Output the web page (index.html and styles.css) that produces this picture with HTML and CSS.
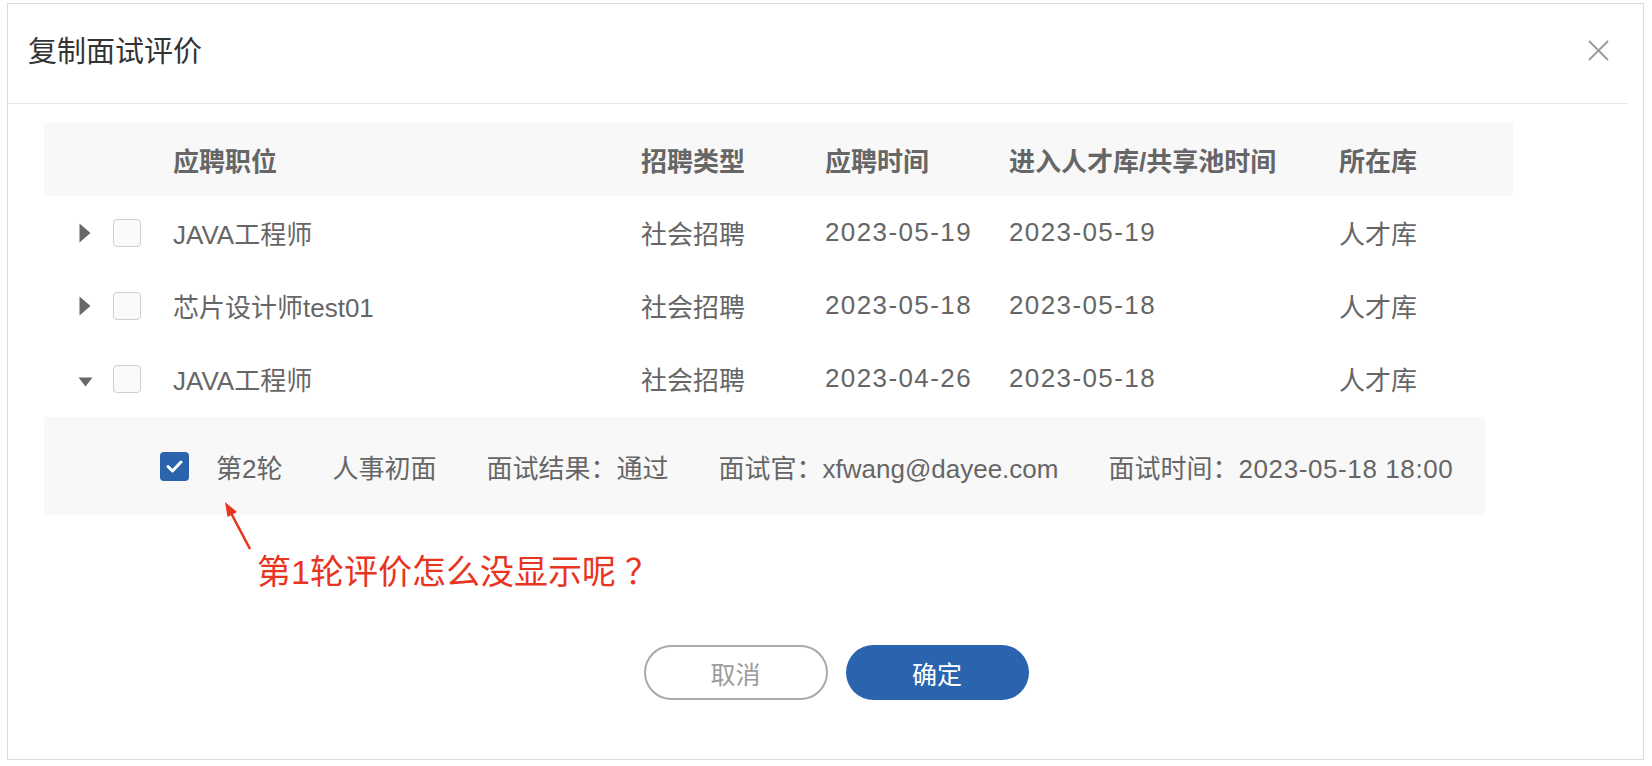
FILE: index.html
```html
<!DOCTYPE html>
<html lang="zh-CN">
<head>
<meta charset="utf-8">
<title>复制面试评价</title>
<link rel="stylesheet" href="styles.css">
</head>
<body>
<div class="dialog">
  <div class="dlg-header">
    <div class="dlg-title">复制面试评价</div>
    <svg class="close" width="21" height="21" viewBox="0 0 21 21"><path d="M1 1 L20 20 M20 1 L1 20" stroke="#9a9a9a" stroke-width="1.8" fill="none"/></svg>
  </div>
  <div class="dlg-body">
    <div class="table">
      <div class="row head">
        <div class="cell first"></div>
        <div class="cell">应聘职位</div>
        <div class="cell">招聘类型</div>
        <div class="cell">应聘时间</div>
        <div class="cell">进入人才库/共享池时间</div>
        <div class="cell">所在库</div>
      </div>
      <div class="row">
        <div class="cell first">
          <span class="arrow"><svg width="12" height="20" viewBox="0 0 12 20"><path d="M0.5 0.5 L11.5 10 L0.5 19.5 Z" fill="#676767"/></svg></span>
          <span class="cb"></span>
        </div>
        <div class="cell">JAVA工程师</div>
        <div class="cell">社会招聘</div>
        <div class="cell date">2023-05-19</div>
        <div class="cell date">2023-05-19</div>
        <div class="cell">人才库</div>
      </div>
      <div class="row">
        <div class="cell first">
          <span class="arrow"><svg width="12" height="20" viewBox="0 0 12 20"><path d="M0.5 0.5 L11.5 10 L0.5 19.5 Z" fill="#676767"/></svg></span>
          <span class="cb"></span>
        </div>
        <div class="cell">芯片设计师test01</div>
        <div class="cell">社会招聘</div>
        <div class="cell date">2023-05-18</div>
        <div class="cell date">2023-05-18</div>
        <div class="cell">人才库</div>
      </div>
      <div class="row">
        <div class="cell first">
          <span class="arrow down"><svg width="15" height="10" viewBox="0 0 15 10"><path d="M0.5 0.5 L14.5 0.5 L7.5 9.5 Z" fill="#676767"/></svg></span>
          <span class="cb"></span>
        </div>
        <div class="cell">JAVA工程师</div>
        <div class="cell">社会招聘</div>
        <div class="cell date">2023-04-26</div>
        <div class="cell date">2023-05-18</div>
        <div class="cell">人才库</div>
      </div>
    </div>
    <div class="subrow">
      <span class="cb checked"><svg width="17" height="13" viewBox="0 0 17 13"><path d="M2 6.5 L6.5 11 L15 2" stroke="#fff" stroke-width="3" fill="none" stroke-linecap="round" stroke-linejoin="round"/></svg></span>
      <span class="item">第2轮</span>
      <span class="item">人事初面</span>
      <span class="item">面试结果：通过</span>
      <span class="item">面试官：xfwang@dayee.com</span>
      <span class="item">面试时间：<span class="sdate">2023-05-18 18:00</span></span>
    </div>
    <div class="note">
      <svg class="note-arrow" width="32" height="52" viewBox="0 0 32 52"><line x1="9" y1="13" x2="28" y2="49" stroke="#e8351f" stroke-width="2.6"/><path d="M3 2 L15 12 L5.5 17 Z" fill="#e8351f"/></svg>
      第1轮评价怎么没显示呢<span class="q">？</span>
    </div>
  </div>
  <div class="dlg-footer">
    <button class="btn cancel">取消</button>
    <button class="btn ok">确定</button>
  </div>
</div>
</body>
</html>
```
FILE: styles.css
```css
html, body {
  margin: 0;
  padding: 0;
  background: #ffffff;
}
body {
  font-family: "Liberation Sans", "Noto Sans CJK SC", sans-serif;
  color: #666;
}
.dialog {
  box-sizing: border-box;
  margin: 3px 0 0 7px;
  width: 1637px;
  height: 757px;
  border: 1px solid #dcdcdc;
  background: #fff;
}
.dlg-header {
  box-sizing: border-box;
  height: 100px;
  margin-right: 15px;
  padding: 0 19px 10px 20px;
  display: flex;
  align-items: center;
  justify-content: space-between;
  border-bottom: 1px solid #e6e6e6;
}
.dlg-title {
  font-size: 29px;
  color: #333;
}
.close {
  display: block;
  margin-top: 3px;
}
.dlg-body {
  padding: 19px 0 0 36px;
}
.table {
  width: 1469px;
}
.row {
  display: grid;
  grid-template-columns: 129px 468px 184px 184px 330px 174px;
  height: 73px;
  align-items: center;
  font-size: 26px;
  color: #666;
}
.row.head {
  background: #f8f8f8;
  font-weight: bold;
  color: #666;
}
.cell {
  white-space: nowrap;
}
.date {
  letter-spacing: 1.4px;
}
.sdate {
  letter-spacing: 0.6px;
}
.cell.first {
  display: flex;
  align-items: center;
  padding-left: 33px;
}
.arrow {
  flex-shrink: 0;
  width: 16px;
  margin-right: 20px;
  display: flex;
  justify-content: center;
}
.arrow svg {
  display: block;
}
.arrow.down {
  padding-top: 7px;
}
.cb {
  flex-shrink: 0;
  box-sizing: border-box;
  width: 28px;
  height: 28px;
  border: 1.5px solid #cfcfcf;
  border-radius: 4px;
  background: #fafafa;
  display: flex;
  align-items: center;
  justify-content: center;
}
.cb.checked {
  width: 29px;
  height: 29px;
  border: none;
  background: #2b63ad;
}
.subrow {
  box-sizing: border-box;
  margin-top: 2px;
  width: 1441px;
  height: 98px;
  background: #f8f8f8;
  display: flex;
  align-items: center;
  padding-left: 116px;
  font-size: 26px;
  color: #666;
}
.subrow .cb {
  margin-right: 27px;
}
.subrow .item {
  flex-shrink: 0;
  white-space: nowrap;
  margin-right: 50px;
}
.subrow .item:last-child {
  margin-right: 0;
}
.note {
  position: relative;
  margin: 37px 0 0 213px;
  font-size: 34px;
  line-height: 40px;
  color: #e8351f;
}
.note .q {
  margin-left: 9px;
}
.note-arrow {
  position: absolute;
  left: -35px;
  top: -52px;
}
.dlg-footer {
  display: flex;
  justify-content: center;
  gap: 18px;
  padding-left: 21px;
  margin-top: 53px;
}
.btn {
  box-sizing: border-box;
  height: 55px;
  border-radius: 28px;
  font-family: "Liberation Sans", "Noto Sans CJK SC", sans-serif;
  font-size: 25px;
  cursor: pointer;
}
.btn.cancel {
  width: 184px;
  background: #fff;
  border: 2px solid #aaaaaa;
  color: #9c9c9c;
}
.btn.ok {
  width: 183px;
  background: #2b64ae;
  border: none;
  color: #fff;
}
```
